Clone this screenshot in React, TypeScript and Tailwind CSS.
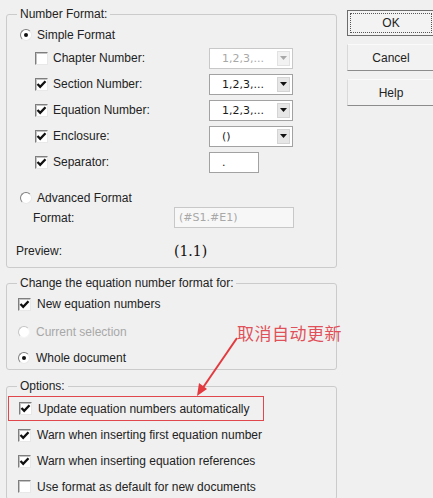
const FONT = { fontFamily: '"Liberation Sans", Arial, sans-serif' };
const FIELD_FONT = { fontFamily: '"DejaVu Sans", "Liberation Sans", sans-serif' };

function Checkbox({ checked }: { checked?: boolean }) {
  return (
    <span className="flex h-[13px] w-[13px] shrink-0 items-center justify-center border border-t-[#7e7e7e] border-l-[#7e7e7e] border-r-[#e8e8e8] border-b-[#e8e8e8] bg-white shadow-[inset_1px_1px_0_#c4c4c4]">
      {checked && (
        <svg width="11" height="11" viewBox="0 0 11 11">
          <path d="M1.5 5 L4.2 7.9 L9.5 2.2" fill="none" stroke="#111" strokeWidth="2.3" />
        </svg>
      )}
    </span>
  );
}

function Radio({ checked, disabled }: { checked?: boolean; disabled?: boolean }) {
  return (
    <span
      className={`flex h-[12px] w-[12px] shrink-0 items-center justify-center rounded-full border bg-white ${
        disabled
          ? "border-t-[#c4c4c4] border-l-[#c4c4c4] border-r-[#f4f4f4] border-b-[#f4f4f4]"
          : "border-t-[#7e7e7e] border-l-[#7e7e7e] border-r-[#e8e8e8] border-b-[#e8e8e8]"
      }`}
    >
      {checked && <span className="h-[4px] w-[4px] rounded-full bg-[#111]" />}
    </span>
  );
}

function Combo({ value, disabled }: { value: string; disabled?: boolean }) {
  return (
    <div
      className={`flex h-[21px] w-[84px] border bg-white ${
        disabled ? "border-[#c8c8c8]" : "border-[#a2a2a2]"
      }`}
    >
      <span
        className={`flex-1 pl-[12px] text-[11px] leading-[19px] ${
          disabled ? "text-[#a8a8a8]" : "text-[#1a1a1a]"
        }`}
        style={FIELD_FONT}
      >
        {value}
      </span>
      <span
        className={`my-[2px] mr-[2px] flex w-[13px] items-center justify-center border ${
          disabled ? "border-[#e2e2e2] bg-[#f2f2f2]" : "border-[#d4d4d4] bg-[#e6e6e6]"
        }`}
      >
        <svg width="7" height="4" viewBox="0 0 7 4">
          <path d="M0 0 H7 L3.5 4 Z" fill={disabled ? "#a8a8a8" : "#111"} />
        </svg>
      </span>
    </div>
  );
}

function Group({
  title,
  className,
  children,
}: {
  title: string;
  className?: string;
  children: React.ReactNode;
}) {
  return (
    <fieldset className={`rounded-[3px] border border-[#cbcbcb] ${className ?? ""}`}>
      <legend className="ml-[10px] px-[3px] text-[12px] leading-[14px] text-[#222]">
        {title}
      </legend>
      {children}
    </fieldset>
  );
}

function NumberRow({
  label,
  checked,
  children,
}: {
  label: string;
  checked?: boolean;
  children: React.ReactNode;
}) {
  return (
    <div className="flex h-[26px] items-center">
      <div className="flex w-[189px] items-center gap-[5px] pl-[15px]">
        <Checkbox checked={checked} />
        <span>{label}</span>
      </div>
      {children}
    </div>
  );
}

function Button({ label, focused }: { label: string; focused?: boolean }) {
  return focused ? (
    <div className="h-[26px] w-[88px] border border-[#6c6c6c] bg-[#f3f3f3] p-[2px]">
      <div className="flex h-full items-center justify-center border border-dotted border-[#555]">
        {label}
      </div>
    </div>
  ) : (
    <div className="flex h-[27px] w-[88px] items-center justify-center border border-t-[#fafafa] border-l-[#d8d8d8] border-b-[#8c8c8c] border-r-[#8c8c8c] bg-[#f2f2f2]">
      {label}
    </div>
  );
}

export default function App() {
  return (
    <div
      className="relative flex h-[498px] w-[433px] overflow-hidden bg-[#f0f0f0] text-[12px] text-[#222]"
      style={FONT}
    >
      <div className="ml-[6px] flex w-[331px] shrink-0 flex-col pt-[7px]">
        <Group title="Number Format:" className="pb-[6px]">
          <div className="pl-[13px] pt-[3px]">
            <div className="flex h-[21px] items-center gap-[5px]">
              <Radio checked />
              <span>Simple Format</span>
            </div>
            <NumberRow label="Chapter Number:">
              <Combo value="1,2,3,..." disabled />
            </NumberRow>
            <NumberRow label="Section Number:" checked>
              <Combo value="1,2,3,..." />
            </NumberRow>
            <NumberRow label="Equation Number:" checked>
              <Combo value="1,2,3,..." />
            </NumberRow>
            <NumberRow label="Enclosure:" checked>
              <Combo value="()" />
            </NumberRow>
            <NumberRow label="Separator:" checked>
              <div
                className="h-[21px] w-[50px] border border-[#a2a2a2] bg-white pl-[12px] text-[11px] leading-[19px]"
                style={FIELD_FONT}
              >
                .
              </div>
            </NumberRow>
            <div className="mt-[14px] flex h-[18px] items-center gap-[5px]">
              <Radio />
              <span>Advanced Format</span>
            </div>
            <div className="flex h-[21px] items-center">
              <span className="w-[154px] pl-[13px]">Format:</span>
              <div
                className="h-[21px] w-[120px] border border-[#c8c8c8] bg-[#f7f7f7] pl-[4px] text-[11px] leading-[19px] text-[#a8a8a8]"
                style={FIELD_FONT}
              >
                (#S1.#E1)
              </div>
            </div>
            <div className="mt-[13px] flex h-[20px] items-center">
              <span className="-ml-[4px] w-[158px]">Preview:</span>
              <span
                className="text-[14px] text-[#111]"
                style={{ fontFamily: '"DejaVu Serif", serif' }}
              >
                (1.1)
              </span>
            </div>
          </div>
        </Group>

        <Group title="Change the equation number format for:" className="mt-[8px]">
          <div className="pl-[11px]">
            <div className="flex h-[28px] items-center gap-[6px]">
              <Checkbox checked />
              <span>New equation numbers</span>
            </div>
            <div className="flex h-[28px] items-center gap-[6px]">
              <Radio disabled />
              <span className="text-[#a8a8a8]">Current selection</span>
            </div>
            <div className="flex h-[23px] items-center gap-[6px]">
              <Radio checked />
              <span>Whole document</span>
            </div>
          </div>
        </Group>

        <Group title="Options:" className="mt-[9px] h-[200px]">
          <div className="pt-[2px]">
            <div className="my-[1px] ml-px flex h-[25px] w-[256px] items-center gap-[6px] border border-[#e0474c] pl-[10px]">
              <Checkbox checked />
              <span>Update equation numbers automatically</span>
            </div>
            <div className="ml-[11px] flex h-[26px] items-center gap-[6px]">
              <Checkbox checked />
              <span>Warn when inserting first equation number</span>
            </div>
            <div className="ml-[11px] flex h-[26px] items-center gap-[6px]">
              <Checkbox checked />
              <span>Warn when inserting equation references</span>
            </div>
            <div className="ml-[11px] flex h-[25px] items-center gap-[6px]">
              <Checkbox />
              <span>Use format as default for new documents</span>
            </div>
          </div>
        </Group>
      </div>

      <div className="ml-[10px] flex flex-col gap-[8px] pt-[10px]">
        <Button label="OK" focused />
        <Button label="Cancel" />
        <Button label="Help" />
      </div>

      {/* annotation */}
      <span
        className="absolute left-[237px] top-[322px] text-[17px] leading-[22px] tracking-[0.5px] text-[#e0505a]"
        style={{ fontFamily: '"Noto Sans CJK SC", sans-serif' }}
      >
        取消自动更新
      </span>
      <svg className="pointer-events-none absolute left-0 top-0" width="433" height="498">
        <line x1="237" y1="338" x2="202" y2="389" stroke="#e23a3f" strokeWidth="2" />
        <path d="M197 396 L199 383 L207 389 Z" fill="#e23a3f" />
      </svg>
    </div>
  );
}
